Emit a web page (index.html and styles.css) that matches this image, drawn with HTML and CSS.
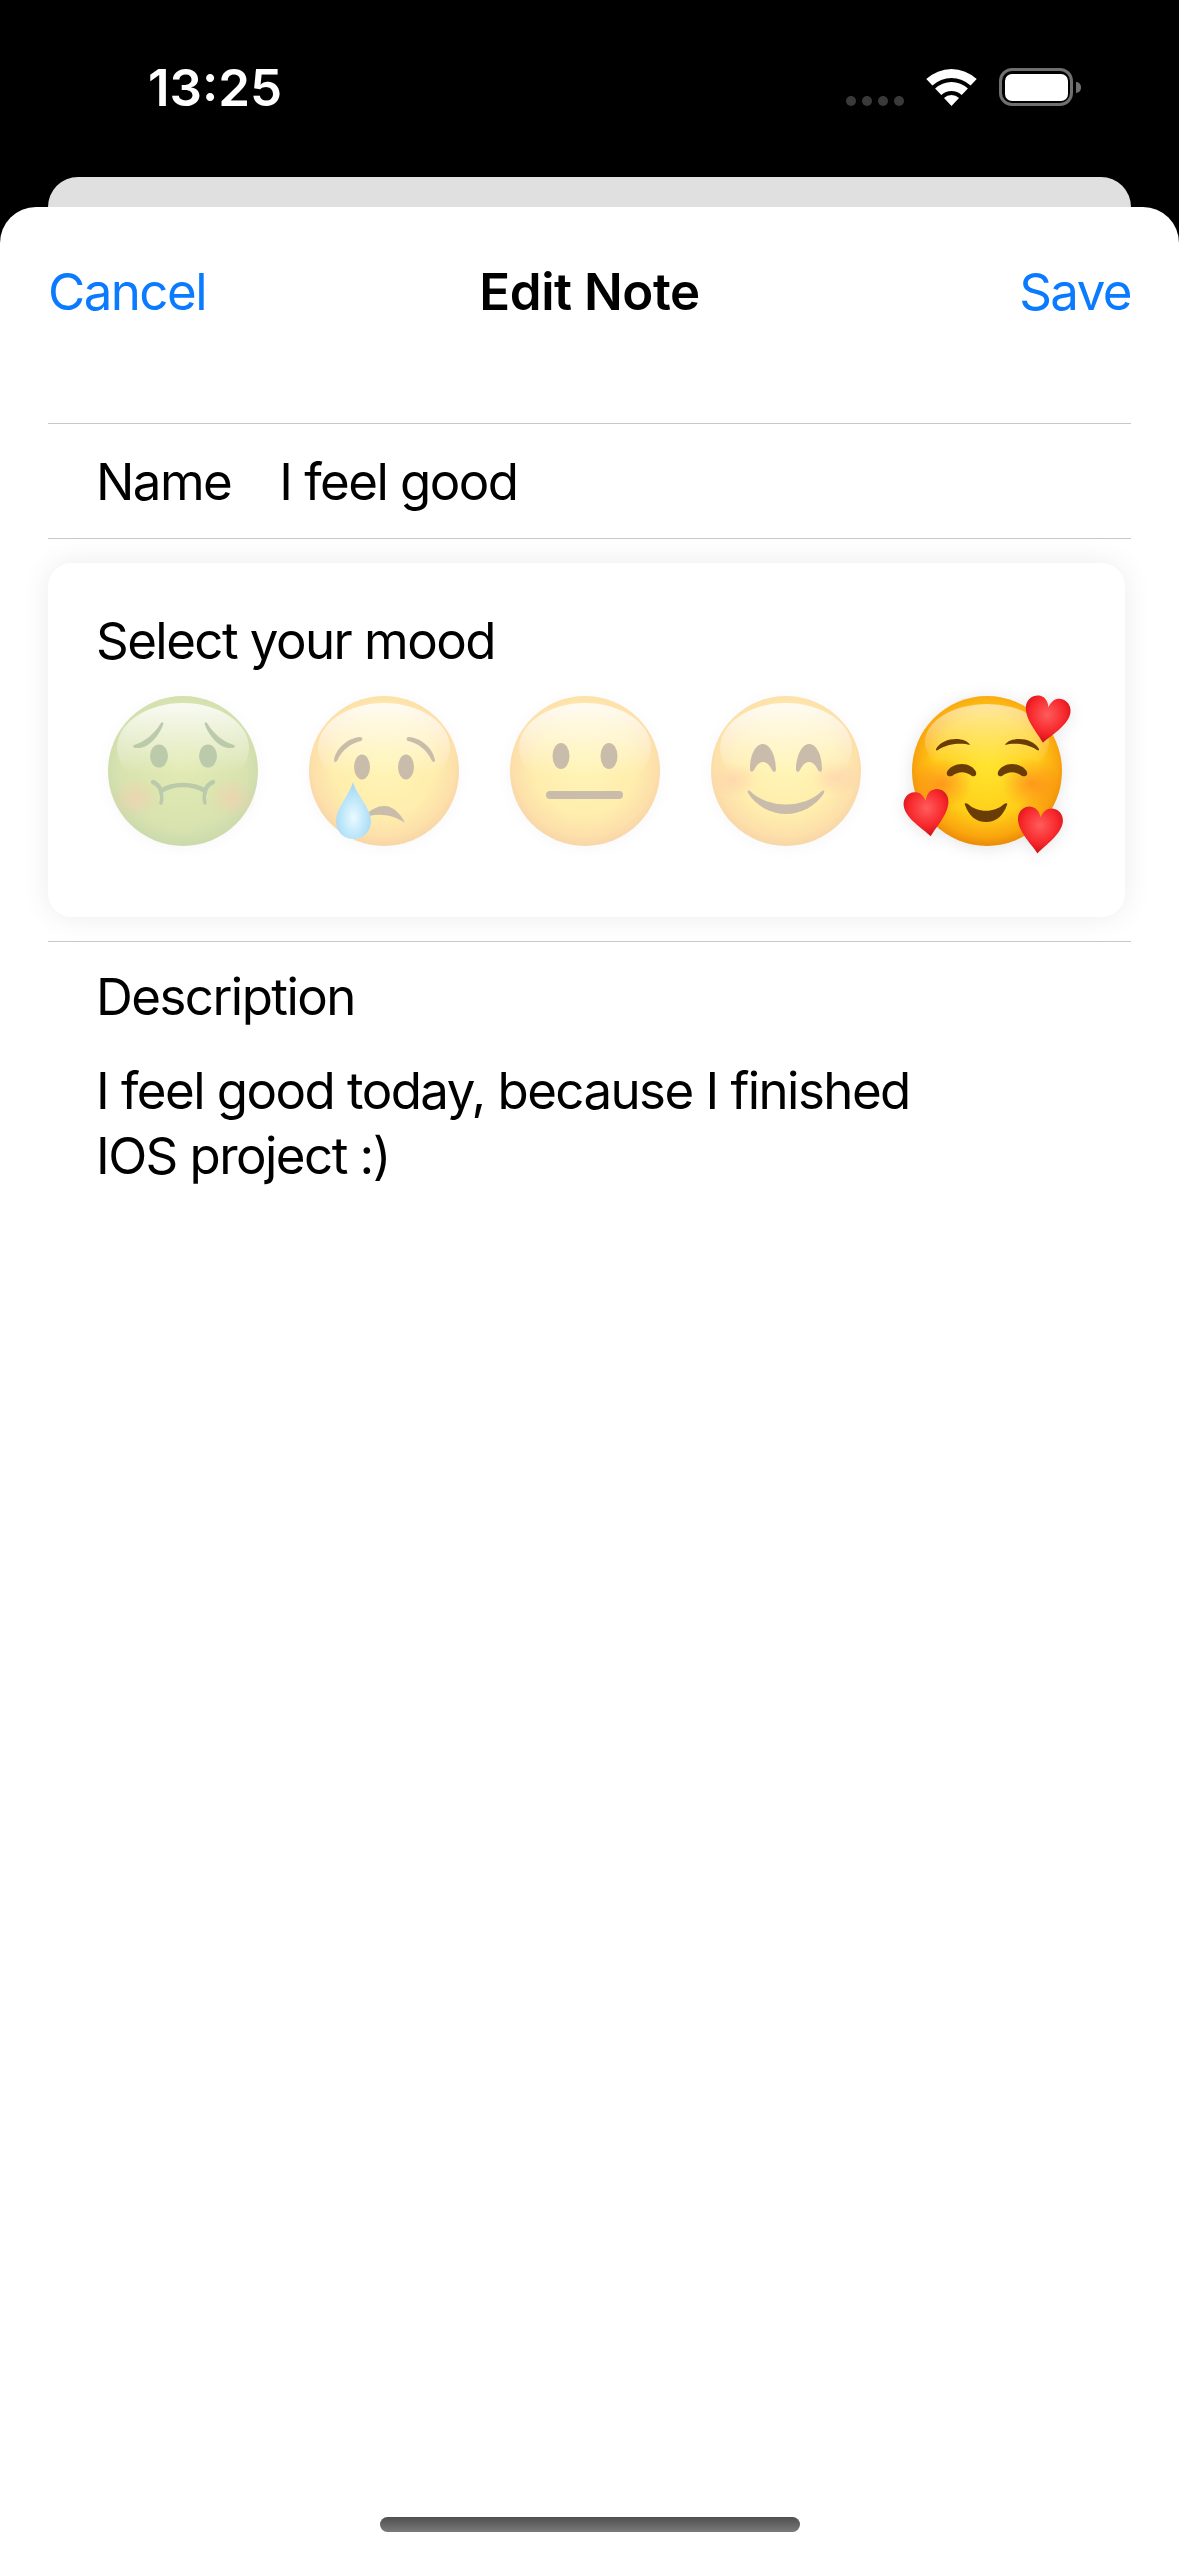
FILE: index.html
```html
<!DOCTYPE html>
<html lang="en">
<head>
    <meta charset="UTF-8">
    <meta name="viewport" content="width=device-width, initial-scale=1.0">
    <title>Edit Note</title>
    <link rel="stylesheet" href="styles.css">
</head>
<body>

    <svg class="defs" width="0" height="0">
        <defs>
            <radialGradient id="faceYellow" cx="50%" cy="46%" r="56%">
                <stop offset="0" stop-color="#ffe430"/>
                <stop offset="0.6" stop-color="#ffcf18"/>
                <stop offset="0.85" stop-color="#faa60e"/>
                <stop offset="1" stop-color="#e58206"/>
            </radialGradient>
            <linearGradient id="faceShine" x1="0" y1="0" x2="0" y2="1">
                <stop offset="0" stop-color="#fff" stop-opacity="0.85"/>
                <stop offset="0.8" stop-color="#fff" stop-opacity="0"/>
            </linearGradient>
            <radialGradient id="faceGreen" cx="50%" cy="46%" r="56%">
                <stop offset="0" stop-color="#aec626"/>
                <stop offset="0.75" stop-color="#90b01e"/>
                <stop offset="1" stop-color="#689010"/>
            </radialGradient>
            <radialGradient id="blush">
                <stop offset="0" stop-color="#ff5f20" stop-opacity="0.5"/>
                <stop offset="1" stop-color="#ff5f20" stop-opacity="0"/>
            </radialGradient>
            <radialGradient id="drop" cx="50%" cy="62%" r="55%">
                <stop offset="0" stop-color="#c8f0ff"/>
                <stop offset="0.55" stop-color="#50c0f5"/>
                <stop offset="1" stop-color="#0a94e0"/>
            </radialGradient>
            <radialGradient id="heart" cx="50%" cy="38%" r="65%">
                <stop offset="0" stop-color="#ff5c5c"/>
                <stop offset="0.6" stop-color="#f7282c"/>
                <stop offset="1" stop-color="#c90c12"/>
            </radialGradient>
            <path id="heartShape" d="M0 23C-7 14-22.500 2-22.500-11-22.500-18-17-23-11-23-6-23-2-20 0-13 2-20 6-23 11-23 17-23 22.500-18 22.500-11 22.500 2 7 14 0 23Z"/>
        </defs>
    </svg>

    <header class="status-bar">
        <span class="time">13:25</span>
        <div class="status-icons">
            <div class="signal"><i></i><i></i><i></i><i></i></div>
            <svg class="wifi" width="51" height="37" viewBox="0 0 51 37">
                <path fill="#fff" d="M.3 10A37 37 0 0 1 50.700 10L44.600 16.600A28 28 0 0 0 6.400 16.600Z"/>
                <path fill="#fff" d="M9.100 19.500A24 24 0 0 1 41.900 19.500L35.700 26A15 15 0 0 0 15.300 26Z"/>
                <path fill="#fff" d="M18 29A11 11 0 0 1 33 29L25.500 37Z"/>
            </svg>
            <div class="battery"><div class="battery-fill"></div></div>
            <div class="battery-cap"></div>
        </div>
    </header>

    <div class="back-card"></div>

    <main class="sheet">
        <nav class="nav-bar">
            <span class="nav-link">Cancel</span>
            <span class="nav-title">Edit Note</span>
            <span class="nav-link nav-save">Save</span>
        </nav>

        <div class="name-row">
            <span class="name-label">Name</span>
            <span>I feel good</span>
        </div>

        <section class="mood-card">
            <div class="mood-title">Select your mood</div>
            <div class="mood-row">

                <!-- nauseated -->
                <svg class="mood faded" width="150" height="150" viewBox="0 0 150 150">
                    <circle cx="75" cy="75" r="75" fill="url(#faceGreen)"/>
                    <ellipse cx="75" cy="52" rx="66" ry="45" fill="url(#faceShine)"/>
                    <ellipse cx="28" cy="102" rx="24" ry="20" fill="url(#blush)"/>
                    <ellipse cx="124" cy="102" rx="24" ry="20" fill="url(#blush)"/>
                    <g fill="#3d6a10">
                        <path d="M26 49C37 46 47 37 53 27 55 25 56 27 55 29 50 42 39 53 29 52 25 52 24 50 26 49Z"/>
                        <path d="M126 49C115 46 105 37 99 27 97 25 96 27 97 29 102 42 113 53 123 52 127 52 128 50 126 49Z"/>
                        <ellipse cx="51" cy="60" rx="9" ry="11.500"/>
                        <ellipse cx="100" cy="60" rx="9" ry="11.500"/>
                    </g>
                    <g fill="none" stroke="#3d6a10" stroke-linecap="round">
                        <path stroke-width="4.500" d="M45 86C49 88 52 91 53 95 65 87 85 87 97 95 98 91 101 88 105 86"/>
                        <path stroke-width="3.500" d="M53 95C54 100 54 104 53 107M97 95C96 100 96 104 97 107"/>
                    </g>
                </svg>

                <!-- crying -->
                <svg class="mood faded" width="150" height="150" viewBox="0 0 150 150">
                    <circle cx="75" cy="75" r="75" fill="url(#faceYellow)"/>
                    <ellipse cx="75" cy="52" rx="66" ry="45" fill="url(#faceShine)"/>
                    <g fill="#6b4310">
                        <path d="M25 64C27 52 39 42 51 41 54 41 54 44 52 45 42 47 33 54 28 65 26 67 25 66 25 64Z"/>
                        <path d="M126 64C124 52 112 42 100 41 97 41 97 44 99 45 109 47 118 54 123 65 125 67 126 66 126 64Z"/>
                        <ellipse cx="53" cy="71" rx="8" ry="12.500"/>
                        <ellipse cx="97" cy="71" rx="8" ry="12.500"/>
                        <path d="M60 116C66 111 71 110 76 110 84 110 92 118 96 127 85 119 72 117 60 120Z"/>
                    </g>
                    <path fill="url(#drop)" d="M44 86C48 100 62 112 62 125 62 136 54 143 44.500 143 35 143 27 136 27 125 27 112 40 100 44 86Z"/>
                </svg>

                <!-- neutral -->
                <svg class="mood faded" width="150" height="150" viewBox="0 0 150 150">
                    <circle cx="75" cy="75" r="75" fill="url(#faceYellow)"/>
                    <ellipse cx="75" cy="52" rx="66" ry="45" fill="url(#faceShine)"/>
                    <ellipse cx="51" cy="60" rx="8.500" ry="13" fill="#6b4310"/>
                    <ellipse cx="99" cy="60" rx="8.500" ry="13" fill="#6b4310"/>
                    <rect x="36" y="95" width="77" height="8" rx="4" fill="#6b4310"/>
                </svg>

                <!-- smiling -->
                <svg class="mood faded" width="150" height="150" viewBox="0 0 150 150">
                    <circle cx="75" cy="75" r="75" fill="url(#faceYellow)"/>
                    <ellipse cx="75" cy="52" rx="66" ry="45" fill="url(#faceShine)"/>
                    <ellipse cx="23" cy="84" rx="24" ry="18" fill="url(#blush)"/>
                    <ellipse cx="125" cy="82" rx="24" ry="18" fill="url(#blush)"/>
                    <g fill="#6b4310">
                        <path d="M39 73C39 58 45 48 52 48 59 48 65 60 65 74 64 77 62 76 61 74 58 68 55 66 52 66 49 66 46 68 43 74 41 77 39 76 39 73Z"/>
                        <path d="M85 74C85 60 91 48 98 48 105 48 111 58 111 73 111 76 109 77 107 74 104 68 101 66 98 66 95 66 92 68 89 74 88 76 86 77 85 74Z"/>
                        <path d="M37 97C36 95 38 94 39 95 58 113 92 113 111 95 113 94 114 95 113 97 105 110 90 118 75 118 60 118 45 110 37 97Z"/>
                    </g>
                </svg>

                <!-- smiling with hearts -->
                <svg class="mood" width="150" height="150" viewBox="0 0 150 150">
                    <circle cx="75" cy="75" r="75" fill="url(#faceYellow)"/>
                    <ellipse cx="75" cy="46" rx="62" ry="38" fill="url(#faceShine)" fill-opacity="0.7"/>
                    <ellipse cx="30" cy="88" rx="30" ry="26" fill="url(#blush)"/>
                    <ellipse cx="120" cy="88" rx="30" ry="26" fill="url(#blush)"/>
                    <g fill="#6b3d06">
                        <path d="M24 53C28 46 36 43 44 43 50 43 56 45 58 49 50 47 37 47 26 54 24 55 24 54 24 53Z"/>
                        <path d="M127 53C123 46 115 43 107 43 101 43 95 45 93 49 101 47 114 47 125 54 127 55 127 54 127 53Z"/>
                        <path d="M35 76C37 71 44 68 50 68 56 68 62 71 64 76 65 80 62 81 60 80 53 75 47 75 40 80 37 81 34 80 35 76Z"/>
                        <path d="M115 76C113 71 106 68 100 68 94 68 88 71 86 76 85 80 88 81 90 80 97 75 103 75 110 80 113 81 116 80 115 76Z"/>
                        <path d="M53 109C52 107 54 107 56 108 65 117 83 117 92 108 94 107 96 107 95 109 91 120 84 126 74 126 64 126 57 120 53 109Z"/>
                    </g>
                    <use href="#heartShape" fill="url(#heart)" transform="translate(134.500 24) rotate(9)"/>
                    <use href="#heartShape" fill="url(#heart)" transform="translate(15.500 117.500) rotate(-8)"/>
                    <use href="#heartShape" fill="url(#heart)" transform="translate(127.500 134.500) rotate(5)"/>
                </svg>

            </div>
        </section>

        <section class="description">
            <div class="description-label">Description</div>
            <p class="description-text">I feel good today, because I finished<br>IOS project :)</p>
        </section>

        <div class="home-indicator"></div>
    </main>

</body>
</html>
```

FILE: styles.css
```css
body {
    font-family: Inter, "Liberation Sans", sans-serif;
    background-color: #000;
    color: #000;
    margin: 0;
    width: 1179px;
    height: 2556px;
    overflow: hidden;
    font-size: 51px;
    letter-spacing: -1.55px;
}

.defs {
    display: block;
    height: 0;
}

.status-bar {
    height: 177px;
    box-sizing: border-box;
    padding: 57px 98px 0 148px;
    display: flex;
    justify-content: space-between;
    align-items: flex-start;
    color: #fff;
}

.time {
    margin-top: 1px;
    font-size: 51px;
    font-weight: 600;
    line-height: 60px;
    letter-spacing: 0;
}

.status-icons {
    display: flex;
    align-items: flex-end;
    margin-top: 11px;
}

.signal {
    display: flex;
    gap: 6px;
    margin-right: 22px;
}

.signal i {
    width: 10px;
    height: 10px;
    border-radius: 50%;
    background-color: #3a3a3a;
}

.wifi {
    margin-right: 22px;
}

.battery {
    width: 74px;
    height: 38px;
    box-sizing: border-box;
    border: 3.500px solid #6f6f6f;
    border-radius: 13px;
    padding: 2.500px;
}

.battery-fill {
    height: 100%;
    background-color: #fff;
    border-radius: 7px;
}

.battery-cap {
    align-self: center;
    width: 5px;
    height: 11px;
    margin-left: 3px;
    background-color: #6f6f6f;
    border-radius: 0 6px 6px 0;
}

.back-card {
    height: 30px;
    margin: 0 48px;
    background-color: #e0e0e0;
    border-radius: 30px 30px 0 0;
}

.sheet {
    height: 2349px;
    position: relative;
    background-color: #fff;
    border-radius: 36px 36px 0 0;
    padding: 0 48px;
}

.nav-bar {
    height: 216px;
    box-sizing: border-box;
    padding-top: 54px;
    display: grid;
    grid-template-columns: 1fr auto 1fr;
    align-items: start;
    line-height: 62px;
}

.nav-link {
    color: #0a7aff;
}

.nav-save {
    text-align: right;
}

.nav-title {
    font-weight: 600;
    letter-spacing: -0.45px;
}

.name-row {
    height: 116px;
    box-sizing: border-box;
    padding: 1px 0 0 48px;
    display: flex;
    align-items: center;
    border-top: 1px solid #c8c8c8;
    border-bottom: 1px solid #c8c8c8;
}

.name-label {
    margin-right: 48px;
}

.mood-card {
    height: 354px;
    box-sizing: border-box;
    margin: 24px 6px 24px 0;
    padding: 47px 0 0 48px;
    border-radius: 24px;
    background-color: #fff;
    box-shadow: 0 0 30px rgba(0, 0, 0, 0.08);
}

.mood-title {
    line-height: 62px;
    margin-bottom: 24px;
}

.mood-row {
    display: flex;
    gap: 51px;
    margin-left: 12px;
}

.mood {
    flex: none;
    overflow: visible;
    filter: drop-shadow(0 2px 8px rgba(0, 0, 0, 0.1));
}

.faded {
    opacity: 0.35;
}

.description {
    border-top: 1px solid #c8c8c8;
    padding: 24px 0 0 48px;
}

.description-label {
    line-height: 62px;
}

.description-text {
    margin: 30px 0 0;
    line-height: 65px;
}

.home-indicator {
    position: absolute;
    left: 380px;
    top: 2310px;
    width: 420px;
    height: 15px;
    border-radius: 8px;
    background: linear-gradient(#4f4f4f, #7a7a7a);
}
```
